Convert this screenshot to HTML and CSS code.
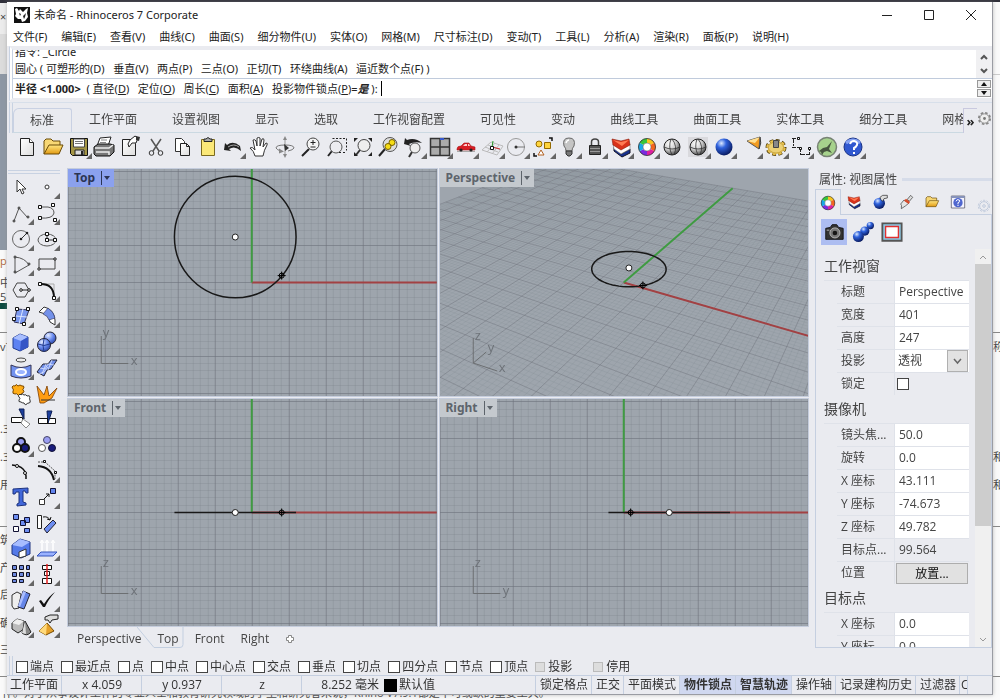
FILE: index.html
```html
<!DOCTYPE html>
<html lang="zh-CN">
<head>
<meta charset="utf-8">
<title>未命名 - Rhinoceros 7 Corporate</title>
<link rel="stylesheet" href="styles.css">
</head>
<body>
<svg class="defs" aria-hidden="true">
  <defs>
    <radialGradient id="gGray" cx=".35" cy=".28" r=".8"><stop offset="0" stop-color="#fff"/><stop offset=".5" stop-color="#ccc"/><stop offset="1" stop-color="#333"/></radialGradient>
    <radialGradient id="gBlue" cx=".35" cy=".28" r=".8"><stop offset="0" stop-color="#dbe9ff"/><stop offset=".35" stop-color="#2f62dd"/><stop offset="1" stop-color="#04104e"/></radialGradient>
    <radialGradient id="gSoft" cx=".35" cy=".28" r=".8"><stop offset="0" stop-color="#e6edff"/><stop offset=".5" stop-color="#6b8cf0"/><stop offset="1" stop-color="#2540a0"/></radialGradient>
    <linearGradient id="gPage" x1="0" y1="0" x2="1" y2="1"><stop offset="0" stop-color="#fff"/><stop offset="1" stop-color="#ddd"/></linearGradient>
    <linearGradient id="gGold" x1="0" y1="0" x2="0" y2="1"><stop offset="0" stop-color="#ffe680"/><stop offset="1" stop-color="#e29a12"/></linearGradient>
    <symbol id="wheel" viewBox="0 0 24 24"><g fill="none" stroke-width="5.500"><path d="M12 4.500A7.500 7.500 0 0 1 18.500 8.200" stroke="#f7c51e"/><path d="M18.500 8.200A7.500 7.500 0 0 1 18.500 15.800" stroke="#f4641e"/><path d="M18.500 15.800A7.500 7.500 0 0 1 12 19.500" stroke="#e020a0"/><path d="M12 19.500A7.500 7.500 0 0 1 5.500 15.800" stroke="#7a2be0"/><path d="M5.500 15.800A7.500 7.500 0 0 1 5.500 8.200" stroke="#18a8e8"/><path d="M5.500 8.200A7.500 7.500 0 0 1 12 4.500" stroke="#35c63c"/></g><circle cx="12" cy="12" r="10.200" fill="none" stroke="#333"/><circle cx="12" cy="12" r="4.800" fill="#fff" stroke="#555" stroke-width=".6"/></symbol>
    <symbol id="layers" viewBox="0 0 24 24"><path d="M5 12l7 7 9-5v4l-8 4-8-6z" fill="#16308e" stroke="#112"/><path d="M4 9l8 5 9-5v5l-9 5-7-5z" fill="#fff" stroke="#777" stroke-width=".6"/><path d="M3 4l9 2 8-2 1 6-9 5-8-5z" fill="#d8321a" stroke="#8c1d0c" stroke-width=".6"/><path d="M4 5l9 6 7-6-8 2z" fill="#ff7a52"/></symbol>
    <symbol id="folder" viewBox="0 0 24 24"><path d="M3 19V6l2-2h5l2 2h7v4" fill="#f7d774" stroke="#6b4a06"/><path d="M3 19l5-9h14l-4 9z" fill="url(#gGold)" stroke="#6b4a06"/></symbol>
    <symbol id="ball" viewBox="0 0 24 24"><circle cx="12" cy="12" r="8" fill="url(#gGray)" stroke="#222"/><path d="M4 12q8 4 16 0M11 4q-3 8 1 16M12 4q6 7 2 16" fill="none" stroke="#333" stroke-width=".8"/></symbol>
  </defs>
</svg>

<div class="desktop" aria-hidden="true">
  <span class="frag l1">×</span><span class="frag l2">p</span><span class="frag l3">中.</span><span class="frag l4">5</span><span class="frag l5">v7</span><span class="frag l6">.3</span><span class="frag l7">.3</span><span class="frag l8">用</span><span class="frag l9">筑</span><span class="frag l10">产</span><span class="frag l11">后</span><span class="frag l12">确</span><span class="frag l13">三</span><span class="frag r1">称</span><span class="frag r2">和</span><span class="frag r3">和</span>
  <i class="rule a"></i><i class="rule b"></i><i class="rule c"></i><i class="rule d"></i>
  <p class="under">作。对于从事设计工作的专业人士和教育研究领域的学生和研究者来说，Rhino V7.9.1都是不可或缺的重要工具。</p>
</div>

<div class="window">
  <header class="titlebar">
    <svg class="logo" viewBox="0 0 16 16"><path d="M0 0h16v16H0z" fill="#111"/><path d="M1 2l2-1 2 3 1-2 3 3 3-3 2-1-1 5 1 4-3 4-3 1-1-3-3 0-3-3 1-2z" fill="#fff"/><path d="M5 6l2 1-1 2zM9 9l3-3-1 4-1 2z" fill="#222"/></svg>
    <h1>未命名 - Rhinoceros 7 Corporate</h1>
    <div class="winbtns">
      <button aria-label="最小化"><svg viewBox="0 0 12 12"><path d="M1 6.500h10"/></svg></button>
      <button aria-label="最大化"><svg viewBox="0 0 12 12"><path d="M1.500 1.500h9v9h-9z"/></svg></button>
      <button aria-label="关闭"><svg viewBox="0 0 12 12"><path d="M1 1l10 10M11 1L1 11"/></svg></button>
    </div>
  </header>
  <nav class="menubar">
    <button>文件(F)</button><button>编辑(E)</button><button>查看(V)</button><button>曲线(C)</button><button>曲面(S)</button><button>细分物件(U)</button><button>实体(O)</button><button>网格(M)</button><button>尺寸标注(D)</button><button>变动(T)</button><button>工具(L)</button><button>分析(A)</button><button>渲染(R)</button><button>面板(P)</button><button>说明(H)</button>
  </nav>

  <section class="command">
    <div class="cmdrow history">
      <div class="log"><p>指令: _Circle</p><p>圆心 ( 可塑形的(D)&nbsp;&nbsp; 垂直(V)&nbsp;&nbsp; 两点(P)&nbsp;&nbsp; 三点(O)&nbsp;&nbsp; 正切(T)&nbsp;&nbsp; 环绕曲线(A)&nbsp;&nbsp; 逼近数个点(F) )</p></div>
      <div class="cmdscroll"><button aria-label="向上"><svg viewBox="0 0 8 6"><path d="M1 5l3-3 3 3"/></svg></button><button aria-label="向下"><svg viewBox="0 0 8 6"><path d="M1 1l3 3 3-3"/></svg></button></div>
    </div>
    <div class="cmdrow prompt">
      <label for="cmd"><b>半径 &lt;1.000&gt;</b>&nbsp; ( 直径(<u>D</u>)&nbsp;&nbsp; 定位(<u>O</u>)&nbsp;&nbsp; 周长(<u>C</u>)&nbsp;&nbsp; 面积(<u>A</u>)&nbsp;&nbsp; 投影物件锁点(<u>P</u>)=<em>是</em> ):</label>
      <span class="caret"></span><input id="cmd" type="text">
      <div class="spin"><button aria-label="上一个"><svg viewBox="0 0 6 4"><path d="M0 4l3-4 3 4z"/></svg></button><button aria-label="下一个"><svg viewBox="0 0 6 4"><path d="M0 0h6L3 4z"/></svg></button></div>
    </div>
  </section>

  <div class="tabbar">
    <div class="tabs"><button class="on">标准</button><button>工作平面</button><button>设置视图</button><button>显示</button><button>选取</button><button>工作视窗配置</button><button>可见性</button><button>变动</button><button>曲线工具</button><button>曲面工具</button><button>实体工具</button><button>细分工具</button><button>网格</button></div>
    <button class="more" aria-label="更多">»</button>
    <button class="gear" aria-label="选项"><svg viewBox="0 0 16 16"><circle cx="8" cy="8" r="6" fill="none" stroke="#888" stroke-width="2" stroke-dasharray="2.700 2"/><circle cx="8" cy="8" r="5" fill="#eee" stroke="#888"/><circle cx="8" cy="8" r="1.500" fill="#777"/></svg></button>
  </div>

  <div class="toolbar">
    <button aria-label="新建"><svg viewBox="0 0 24 24"><path d="M5.500 3.500h9l4 4v13h-13z" fill="url(#gPage)" stroke="#222"/><path d="M14.500 3.500v4h4" fill="#fff" stroke="#222"/></svg></button>
    <button aria-label="打开"><svg viewBox="0 0 24 24"><use href="#folder"/></svg></button>
    <button class="fly" aria-label="保存"><svg viewBox="0 0 24 24"><path d="M3.500 3.500h17v17h-15l-2-2z" fill="#a49646" stroke="#111"/><path d="M6.500 4h11v8h-11z" fill="#fff" stroke="#444"/><path d="M8 6.500h8M8 8.500h8" stroke="#777"/><path d="M8 15h9v5H8z" fill="#ddd" stroke="#222"/><path d="M14 16h2v4h-2z" fill="#222"/></svg></button>
    <button aria-label="打印"><svg viewBox="0 0 24 24"><path d="M8 3l11-1-3 9H5z" fill="#fff" stroke="#222"/><path d="M2 12l4-3h12l4 1v7l-4 4H4l-2-2z" fill="#777" stroke="#111"/><path d="M3 13h14l4-3M4 17h13v3" fill="none" stroke="#eee" stroke-width="1.500"/><path d="M9 5h6M8 7.500h6" stroke="#888"/></svg></button>
    <button aria-label="文件属性"><svg viewBox="0 0 24 24"><path d="M4.500 4.500h9l4 4v12h-13z" fill="url(#gPage)" stroke="#222"/><path d="M12 5l-2 4 1 3 3-4h4l2-5-3-2z" fill="#fff" stroke="#222"/><path d="M18 1l4 1-1 4-3-1z" fill="#333"/></svg></button>
    <button aria-label="剪切"><svg viewBox="0 0 24 24"><path d="M7 4l8 12M17 4L9 16" stroke="#555" stroke-width="1.500" fill="none"/><circle cx="7.500" cy="18" r="2.300" fill="none" stroke="#333"/><circle cx="16.500" cy="18" r="2.300" fill="none" stroke="#333"/></svg></button>
    <button aria-label="复制"><svg viewBox="0 0 24 24"><path d="M5.500 3.500h6l3 3v10h-9z" fill="#fff" stroke="#333"/><path d="M10.500 8.500h6l3 3v9h-9z" fill="url(#gPage)" stroke="#222"/><path d="M16.500 8.500v3h3" fill="none" stroke="#222"/></svg></button>
    <button aria-label="粘贴"><svg viewBox="0 0 24 24"><path d="M5.500 4.500h13v16h-13z" fill="#fbe878" stroke="#7b6a1e"/><path d="M8 6.500V4h2q2-3 4 0h2v2.500z" fill="#aaa" stroke="#222"/></svg></button>
    <button class="fly" aria-label="撤销"><svg viewBox="0 0 24 24"><path d="M3 15l1-7 2 2q6-5 13 1l1 5q-6-6-12-2l2 2z" fill="#222"/><path d="M7 12q6-4 11 0" stroke="#aaa" fill="none"/></svg></button>
    <button aria-label="平移"><svg viewBox="0 0 24 24"><path d="M8 21q-1-5-5-8 2-2 5 2L6 5q2-1 3 1l1 5V3q2-1 3 0v8l2-7q2-1 2 1l-1 7 3-4q2 0 1 2-3 5-4 11z" fill="#fff" stroke="#333"/></svg></button>
    <button aria-label="旋转视图"><svg viewBox="0 0 24 24"><path d="M12 3v18" stroke="#999"/><path d="M3 13q0-3 9-3t9 3q-1 2-6 3M3 13q1 2 5 3" fill="none" stroke="#777"/><path d="M12 1l2 4h-4zM12 23l2-4h-4zM6 13.500l5 3-5 2z" fill="#888"/><path d="M11 9l5 4-4 3z" fill="#333"/></svg></button>
    <button aria-label="缩放"><svg viewBox="0 0 24 24"><path d="M10 14l-7 7" stroke="#222" stroke-width="2"/><circle cx="14" cy="9" r="6" fill="#f4f4f4" stroke="#444"/><path d="M14 5v5M11.500 7.500h5M11.500 12h5" stroke="#222"/></svg></button>
    <button aria-label="窗选缩放"><svg viewBox="0 0 24 24"><path d="M7.500 3.500h14v12" fill="none" stroke="#222" stroke-dasharray="2 1.500"/><path d="M7 16l-4 5" stroke="#222" stroke-width="2"/><circle cx="11" cy="12" r="6" fill="#ececf0" stroke="#555"/><path d="M14 17.500h7" stroke="#222" stroke-dasharray="2"/></svg></button>
    <button aria-label="缩放至范围"><svg viewBox="0 0 24 24"><path d="M9 15l-4 5" stroke="#333" stroke-width="2"/><circle cx="13" cy="10.500" r="6" fill="#eee" stroke="#444"/><path d="M3 7V3h4zM17 3h4v4zM21 17v4h-4zM7 21H3v-4z" fill="#222"/></svg></button>
    <button aria-label="缩放选取物件"><svg viewBox="0 0 24 24"><path d="M9 14l-6 7" stroke="#222" stroke-width="2"/><circle cx="14" cy="9.500" r="7" fill="#ddd" stroke="#555"/><circle cx="16" cy="7.500" r="3" fill="#f6dd14" stroke="#766000"/><circle cx="12" cy="11.500" r="3" fill="#f6dd14" stroke="#766000"/></svg></button>
    <button class="fly" aria-label="上一视图"><svg viewBox="0 0 24 24"><path d="M2 9l1-6 2 2q8-3 15 3-7-2-13 1l2 2z" fill="#222"/><path d="M10 17l-3 5" stroke="#333" stroke-width="2"/><circle cx="13" cy="13" r="5" fill="#eee" stroke="#555"/></svg></button>
    <button class="fly" aria-label="四视图"><svg viewBox="0 0 24 24"><path d="M2.500 3.500h19v17h-19z" fill="#ababab" stroke="#333" stroke-width="1.500"/><path d="M12 3v18M3 12h18" stroke="#333" stroke-width="1.500"/><path d="M12 3h4v2h-4z" fill="#3759cc"/></svg></button>
    <button class="fly" aria-label="设置视图"><svg viewBox="0 0 24 24"><path d="M3 16.500h18" stroke="#aaa"/><path d="M3 14q0-3 4-3l3-3h5l2 3 4 1v3H3z" fill="#d71e24" stroke="#a81418" stroke-width=".6"/><path d="M9 11l2-2h2v2zM14 9h1l1 2h-2z" fill="#fcc"/><circle cx="7" cy="15" r="1.600" fill="#222"/><circle cx="17" cy="15" r="1.600" fill="#222"/></svg></button>
    <button class="fly" aria-label="工作平面"><svg viewBox="0 0 24 24"><path d="M2 15l9-8 12 4-6 9zM5 12l13 5M8 10l13 5M7 17l8-9M12 19l7-9" fill="none" stroke="#bbb"/><path d="M12 12l8 2" stroke="#c22"/><path d="M12 12l1-6" stroke="#292"/><path d="M10.500 11.500h3v3h-3z" fill="#fff" stroke="#111"/></svg></button>
    <button class="fly" aria-label="设置工作平面"><svg viewBox="0 0 24 24"><circle cx="11" cy="12" r="8.500" fill="none" stroke="#999"/><path d="M11 12h9" stroke="#777"/><circle cx="11" cy="12" r="1.500" fill="#333"/></svg></button>
    <button class="fly" aria-label="选取"><svg viewBox="0 0 24 24"><path d="M3 18v3h3M18 3h3v3" fill="none" stroke="#111" stroke-width="1.500"/><circle cx="8" cy="9" r="3" fill="#ffd53e" stroke="#946a00"/><path d="M13.500 7.500h6v6h-6z" fill="#ffd53e" stroke="#946a00"/><path d="M10 15l3 5H7z" fill="#fff" stroke="#b06020"/></svg></button>
    <button class="fly" aria-label="显示与隐藏"><svg viewBox="0 0 24 24"><path d="M9 16q0-3-2-5-2-8 5-8t5 8q-2 2-2 5z" fill="#c4c4c4" stroke="#666"/><path d="M9 8q1-3 3-3" stroke="#fff" fill="none" stroke-width="1.500"/><path d="M9 16h6v3l-2 2h-2l-2-2z" fill="#777" stroke="#333"/></svg></button>
    <button class="fly" aria-label="锁定"><svg viewBox="0 0 24 24"><path d="M8.500 11V7q0-3 3.500-3t3.500 3v4" fill="none" stroke="#444" stroke-width="1.500"/><path d="M6.500 10.500h11v9h-11z" fill="#555" stroke="#222"/><path d="M7 13.500h10M7 16.500h10" stroke="#999"/></svg></button>
    <button class="fly" aria-label="图层"><svg viewBox="0 0 24 24"><use href="#layers"/></svg></button>
    <button class="fly" aria-label="属性"><svg viewBox="0 0 24 24"><use href="#wheel" x="2" y="2" width="20" height="20"/></svg></button>
    <button aria-label="着色"><svg viewBox="0 0 24 24"><use href="#ball"/></svg></button>
    <button class="fly" aria-label="着色选项"><svg viewBox="0 0 24 24"><path d="M2 2h20v20H2z" fill="#d9d9dd"/><use href="#ball"/></svg></button>
    <button class="fly" aria-label="渲染"><svg viewBox="0 0 24 24"><circle cx="12" cy="12" r="8.500" fill="url(#gBlue)"/></svg></button>
    <button class="fly" aria-label="聚光灯"><svg viewBox="0 0 24 24"><path d="M22 2L9 6l12 8z" fill="#f29b20" stroke="#555"/><path d="M22 2L9 6l8 2z" fill="#ffdf90"/><path d="M22 2q2 6-1 12" fill="none" stroke="#333"/></svg></button>
    <button class="fly" aria-label="选项"><svg viewBox="0 0 24 24"><ellipse cx="12" cy="12.500" rx="8.500" ry="6.500" fill="none" stroke="#4b3800" stroke-width="4" stroke-dasharray="3.600 2.200"/><ellipse cx="12" cy="12.500" rx="8.500" ry="6.500" fill="#e8c862" stroke="#e8c04c" stroke-width="2.600" stroke-dasharray="2.800 3" stroke-dashoffset="-.4"/><ellipse cx="12" cy="12.500" rx="7.500" ry="5.500" fill="#ecd074" stroke="#b08a20" stroke-width=".6"/><path d="M9.500 5.500h5v7h-5z" fill="#888" stroke="#444"/></svg></button>
    <button class="fly" aria-label="尺寸标注"><svg viewBox="0 0 24 24"><path d="M3 3.500h6M4.500 4v7M3 12.500h8M11.500 13v7M12 19.500h8M20.500 12v8" fill="none" stroke="#222" stroke-dasharray="4 1"/><path d="M8.500 2.500h2v2h-2zM10.500 12.500h2v2h-2zM19.500 12.500h2v2h-2z" fill="#fff" stroke="#111"/></svg></button>
    <button class="fly" aria-label="Grasshopper"><svg viewBox="0 0 24 24"><circle cx="12" cy="12" r="9.500" fill="#a6d28c" stroke="#778274" stroke-width="1.500"/><path d="M4 16l4-3 4-1 5-6-3 8 3 4-5-2-3 1-2 3-1-3z" fill="#46553f"/></svg></button>
    <button class="fly" aria-label="帮助"><svg viewBox="0 0 24 24"><circle cx="12" cy="12" r="9" fill="#3058d0" stroke="#183080"/><path d="M5 8q7-6 14 0" stroke="#86a2f2" stroke-width="3" fill="none"/><path d="M9 9q1-3 4-3 4 1 3 4-1 2-3 3v2M13 17v2" fill="none" stroke="#fff" stroke-width="2"/></svg></button>
  </div>

  <main class="work">
    <aside class="palette">
      <button aria-label="选取"><svg viewBox="0 0 24 24"><path d="M8 5v12l3-3 2 5 2-1-2-4h4z" fill="#fff" stroke="#333"/></svg></button>
      <button class="fly" aria-label="点"><svg viewBox="0 0 24 24"><circle cx="12" cy="12" r="2" fill="#fff" stroke="#333"/></svg></button>
      <button class="fly" aria-label="多重直线"><svg viewBox="0 0 24 24"><path d="M5 20L10 7l9 10" fill="none" stroke="#555"/><g fill="#fff" stroke="#222"><circle cx="5" cy="20" r="1"/><circle cx="10" cy="7" r="1"/><circle cx="19" cy="16" r="1"/></g></svg></button>
      <button class="fly" aria-label="曲线"><svg viewBox="0 0 24 24"><path d="M5 6h8q6 1 6 6-1 6-14 5" fill="none" stroke="#555"/><g fill="#fff" stroke="#111"><path d="M3.500 4.500h3v3h-3zM16.500 2.500h3v3h-3zM3.500 15.500h3v3h-3zM18.500 17.500h3v3h-3z"/></g></svg></button>
      <button class="fly" aria-label="圆"><svg viewBox="0 0 24 24"><circle cx="12" cy="12" r="8.500" fill="none" stroke="#666"/><path d="M12 12l6-6" stroke="#333"/><circle cx="12" cy="12" r="1.300" fill="#222"/><circle cx="18" cy="6" r="1.300" fill="#222"/></svg></button>
      <button class="fly" aria-label="椭圆"><svg viewBox="0 0 24 24"><ellipse cx="12" cy="13" rx="9" ry="6" fill="none" stroke="#555"/><path d="M12 6v7h8" fill="none" stroke="#333"/><g fill="#fff" stroke="#111"><path d="M10.500 5.500h3v3h-3zM10.500 11.500h3v3h-3zM18.500 11.500h3v3h-3z"/></g></svg></button>
      <button class="fly" aria-label="圆弧"><svg viewBox="0 0 24 24"><path d="M6 21V5q10 1 14 8z" fill="none" stroke="#555"/><g fill="#fff" stroke="#222"><circle cx="6" cy="20" r="1"/><circle cx="6" cy="5" r="1"/><circle cx="20" cy="12" r="1"/></g></svg></button>
      <button class="fly" aria-label="矩形"><svg viewBox="0 0 24 24"><path d="M4 7h16v10H4z" fill="none" stroke="#444"/><g fill="#fff" stroke="#111"><circle cx="4" cy="17" r="1.200"/><circle cx="20" cy="7" r="1.200"/></g></svg></button>
      <button class="fly" aria-label="多边形"><svg viewBox="0 0 24 24"><path d="M8 5h8l4 7-4 7H8l-4-7z" fill="none" stroke="#444"/><path d="M12 12h8" stroke="#222"/><circle cx="12" cy="12" r="1.300" fill="#fff" stroke="#111"/><circle cx="20" cy="12" r="1.300" fill="#fff" stroke="#111"/></svg></button>
      <button class="fly" aria-label="圆角"><svg viewBox="0 0 24 24"><path d="M4 6h15v14" fill="none" stroke="#aaa"/><path d="M4 6q15-1 15 14" fill="none" stroke="#111" stroke-width="2"/><path d="M3.500 4.500h3v3h-3zM17.500 18.500h3v3h-3z" fill="#fff" stroke="#111"/></svg></button>
      <button class="fly" aria-label="曲面"><svg viewBox="0 0 24 24"><path d="M8 5l12 1-5 14-10-2z" fill="#7b98ee" stroke="#335"/><path d="M14 5l-4 15M7 12l11 1" stroke="#dce6ff"/><g fill="#fff" stroke="#111"><path d="M6.500 3.500h3v3h-3zM17.500 3.500h3v3h-3zM3.500 13.500h3v3h-3zM13.500 18.500h3v3h-3z"/></g></svg></button>
      <button class="fly" aria-label="曲面建模"><svg viewBox="0 0 24 24"><path d="M4 8l5-5q10 2 11 13v5l-5-3q-1-8-11-10z" fill="#fff" stroke="#333"/><path d="M8 10l5-6q6 4 7 10l-6 2q-1-4-6-6z" fill="#7391ea" stroke="#335" stroke-width=".6"/></svg></button>
      <button class="fly" aria-label="实体"><svg viewBox="0 0 24 24"><path d="M4 8l7-4 8 3v10l-8 4-7-3z" fill="#5d82f2" stroke="#223c90"/><path d="M4 8l7-4 8 3-7 4z" fill="#a8beff"/><path d="M12 11l7-4v10l-8 4z" fill="#3556c6"/></svg></button>
      <button class="fly" aria-label="布尔运算"><svg viewBox="0 0 24 24"><circle cx="15" cy="8" r="6" fill="url(#gSoft)" stroke="#223"/><circle cx="9" cy="15" r="6.500" fill="url(#gSoft)" stroke="#223"/><path d="M3 14q6 3 12 0M9 9q-2 6 0 13" fill="none" stroke="#223c90"/></svg></button>
      <button class="fly" aria-label="从物件建立"><svg viewBox="0 0 24 24"><ellipse cx="12" cy="4" rx="5" ry="2" fill="#eee" stroke="#444"/><path d="M2 9q10 5 20 0v11q-10 4-20 0z" fill="#7292ef" stroke="#335"/><ellipse cx="12" cy="16" rx="5" ry="3" fill="#9db6ff" stroke="#fff" stroke-width="2"/></svg></button>
      <button class="fly" aria-label="网格"><svg viewBox="0 0 24 24"><path d="M2 16l6-8 5 0 3-4 6 0-6 9-4 1-3 6z" fill="#7391ea" stroke="#223"/><path d="M5 12l5 1 3-5 6 1M4 18l5-2 4-5M11 8l-4 10M17 4l-4 10" stroke="#dce4ff" fill="none" stroke-width=".8"/></svg></button>
      <button aria-label="炸开"><svg viewBox="0 0 24 24"><path d="M3 5q1-2 3-1 1-3 3 0 2-2 4 0 2-1 2 2-2 1-1 2 2 1 0 3-2 0-2 2-2 2-3 0-1-2-3-1-3 0-2-3 1-1 0-2z" fill="#ffad18" stroke="#7c4800"/><path d="M12 13q1-2 3 0 2-1 3 1 3-1 3 1-1 2 0 3 1 3-1 3-2 0-2 1-2 2-3-1-2 0-3-1-3 0-2-2 2-2 0-3t1-3z" fill="#fff" stroke="#333"/></svg></button>
      <button aria-label="组合"><svg viewBox="0 0 24 24"><path d="M5 21L2 4l7 9 3-9 2 10 8-8-5 10-8 5z" fill="#ff9c12" stroke="#7c3d00" stroke-width=".8"/><path d="M6 18h14" stroke="#333"/></svg></button>
      <button aria-label="修剪"><svg viewBox="0 0 24 24"><path d="M2.500 10.500h11v5h-11z" fill="#fff" stroke="#111"/><path d="M10 2h5v10z" fill="#1c3f9e" stroke="#0d1e55"/><path d="M14 12l7 5-4 4-5-5z" fill="#fff" stroke="#888"/></svg></button>
      <button aria-label="分割"><svg viewBox="0 0 24 24"><path d="M3.500 11.500h17v5h-17z" fill="#fff" stroke="#111"/><path d="M12 4h5l-4 12z" fill="#1c3f9e" stroke="#0d1e55"/><path d="M12.500 11v6" stroke="#111"/></svg></button>
      <button class="fly" aria-label="群组"><svg viewBox="0 0 24 24"><circle cx="12" cy="9" r="4" fill="#9a9df2" stroke="#111" stroke-width="2"/><circle cx="16" cy="15" r="4" fill="#191c7c" stroke="#111" stroke-width="2"/><circle cx="8" cy="15" r="4" fill="#fff" stroke="#111" stroke-width="2"/></svg></button>
      <button aria-label="解散群组"><svg viewBox="0 0 24 24"><circle cx="12" cy="7" r="3.500" fill="#9a9df2" stroke="#446"/><circle cx="17" cy="15" r="3.500" fill="#191c7c" stroke="#113"/><circle cx="7" cy="15" r="3.500" fill="#fff" stroke="#555"/></svg></button>
      <button aria-label="编辑点"><svg viewBox="0 0 24 24"><path d="M3 6q15 1 14 14" fill="none" stroke="#111" stroke-width="1.500"/><g fill="#fff" stroke="#111"><circle cx="8" cy="7" r="1.500"/><circle cx="16" cy="14" r="1.500"/></g></svg></button>
      <button class="fly" aria-label="控制点"><svg viewBox="0 0 24 24"><path d="M3 7q13 1 16 14" fill="none" stroke="#111" stroke-width="2"/><path d="M3 3h7l10 9v8" fill="none" stroke="#555" stroke-dasharray="2 1"/><path d="M8.500 1.500h2v2h-2zM19.500 12.500h2v2h-2z" fill="#fff" stroke="#111"/></svg></button>
      <button aria-label="文字"><svg viewBox="0 0 24 24"><path d="M4 4l15-1v5h-2l-1-2h-2v11l3 1v2l-9 1v-2l2-1V7H7L6 9H4z" fill="#4167da" stroke="#1d327e"/></svg></button>
      <button class="fly" aria-label="移动"><svg viewBox="0 0 24 24"><path d="M15.500 3.500h5v5h-5z" fill="#6184ee" stroke="#113"/><path d="M4.500 14.500h5v5h-5z" fill="#fff" stroke="#333"/><path d="M9 14l5-5M11 9h3v3" fill="none" stroke="#111"/></svg></button>
      <button aria-label="复制"><svg viewBox="0 0 24 24"><g stroke="#113"><path d="M4.500 3.500h5v5h-5zM11.500 9.500h5v5h-5zM15.500 6.500h5v5h-5zM15.500 17.500h5v4h-5z" fill="#6d8df1"/><path d="M4.500 15.500h5v5h-5z" fill="#fff"/></g></svg></button>
      <button aria-label="旋转"><svg viewBox="0 0 24 24"><path d="M2.500 4.500h4v13h-4z" fill="#fff" stroke="#222"/><path d="M9 18L18 9l3 3-9 10z" fill="#6d8df1" stroke="#223"/><path d="M8 6q5-1 7 3M12 8l3 1 1-3" fill="none" stroke="#111"/></svg></button>
      <button class="fly" aria-label="倒角"><svg viewBox="0 0 24 24"><path d="M3 8l8-6 10 3v12l-9 4-9-4z" fill="#5479e8" stroke="#1f347e"/><path d="M3 8l8-6 10 3-8 5z" fill="#a7bdff"/><path d="M10 21v-6l7-3v7z" fill="#fff" stroke="#333"/></svg></button>
      <button class="fly" aria-label="投影"><svg viewBox="0 0 24 24"><path d="M7 4v11M12 4v11M18 4v11" stroke="#fff" stroke-width="1.500"/><path d="M5 6l2-3 2 3M10 6l2-3 2 3M16 6l2-3 2 3" fill="none" stroke="#fff"/><path d="M2 19l4-4h16l-4 4z" fill="#9ab2ff" stroke="#3554bb"/></svg></button>
      <button class="fly" aria-label="阵列"><svg viewBox="0 0 24 24"><path d="M3.500 3.500h4v4h-4zM10.500 3.500h4v4h-4zM17.500 3.500h3v4h-3zM3.500 10.500h4v4h-4zM10.500 10.500h4v4h-4zM17.500 10.500h3v4h-3zM3.500 17.500h4v3h-4zM10.500 17.500h4v3h-4z" fill="#6c87dc" stroke="#112"/></svg></button>
      <button class="fly" aria-label="对齐"><svg viewBox="0 0 24 24"><path d="M7.500 3.500h9v4h-9zM9.500 9.500h5v4h-5zM7.500 16.500h9v5h-9z" fill="#fff" stroke="#111"/><path d="M12 2v20" stroke="#e02020" stroke-width="1.500"/></svg></button>
      <button class="fly" aria-label="弯曲"><svg viewBox="0 0 24 24"><path d="M3 7l5-3 4 2-2 14-5 1-2-3z" fill="#eee" stroke="#333"/><path d="M14 3l7 3-6 15-6-2z" fill="#6585e8" stroke="#223"/><path d="M14 3l3 1-6 15-2-1z" fill="#a9bcff"/></svg></button>
      <button class="fly" aria-label="检查"><svg viewBox="0 0 24 24"><path d="M4 13l2-1 3 4Q14 8 20 4q-7 8-10 15H8z" fill="#111"/></svg></button>
      <button class="fly" aria-label="网格工具"><svg viewBox="0 0 24 24"><path d="M3 9l5-4 7 2v8l-6 4-6-4z" fill="#bbb" stroke="#222"/><path d="M3 9l5-4 7 2-5 4z" fill="#eee"/><path d="M16 7l6 11q-4 5-9 1z" fill="#888" stroke="#222"/><path d="M16 7l-3 12 4 1z" fill="#ddd"/></svg></button>
      <button class="fly" aria-label="提取"><svg viewBox="0 0 24 24"><path d="M4 17l8-8 7 8-8 4z" fill="#e6a12a" stroke="#734800"/><path d="M4 17l8-8-1 12z" fill="#ffd97a"/><path d="M10 3l5-2h8v4l-6 1-2 3-2-3h-3z" fill="#ddd" stroke="#222"/></svg></button>
    </aside>

    <section class="stage">
      <div class="views">
        <article class="view active"><svg class="canvas" data-view="top" viewBox="0 0 369 227" preserveAspectRatio="xMidYMid slice"></svg><button class="vlabel"><span>Top</span><i></i></button></article>
        <article class="view"><svg class="canvas" data-view="perspective" viewBox="0 0 369 227" preserveAspectRatio="xMidYMid slice"></svg><button class="vlabel"><span>Perspective</span><i></i></button></article>
        <article class="view"><svg class="canvas" data-view="front" viewBox="0 0 369 227" preserveAspectRatio="xMidYMid slice"></svg><button class="vlabel"><span>Front</span><i></i></button></article>
        <article class="view"><svg class="canvas" data-view="right" viewBox="0 0 369 227" preserveAspectRatio="xMidYMid slice"></svg><button class="vlabel"><span>Right</span><i></i></button></article>
      </div>
      <div class="viewtabs"><button>Perspective</button><button class="on"><svg viewBox="0 0 52 24" aria-hidden="true"><path d="M0 0l17 20.500h26q3 0 3-3V0"/></svg>Top</button><button>Front</button><button>Right</button><button class="plus" aria-label="新建视图"><svg viewBox="0 0 10 10"><path d="M3.500 1.500h3v2h2v3h-2v2h-3v-2h-2v-3h2z"/></svg></button></div>
    </section>

    <aside class="props">
      <h2>属性: 视图属性</h2>
      <div class="ptabs">
        <button class="on" aria-label="属性"><svg viewBox="0 0 24 24"><use href="#wheel"/></svg></button>
        <button aria-label="图层"><svg viewBox="0 0 24 24"><use href="#layers"/></svg></button>
        <button aria-label="渲染"><svg viewBox="0 0 24 24"><circle cx="11" cy="14" r="8.500" fill="url(#gBlue)"/><path d="M12 5l4-3h7v4l-5 1-2 4-3-3z" fill="#ddd" stroke="#222"/></svg></button>
        <button aria-label="材质"><svg viewBox="0 0 24 24"><path d="M14 8l5-6 3 3-5 6z" fill="#ddd" stroke="#333"/><path d="M9 9l7 5-5 4-6 4q1-6-1-7z" fill="#e6e6e6" stroke="#333"/><path d="M12 7l6 5-2 3-7-5z" fill="#d84a2a"/></svg></button>
        <button aria-label="图库"><svg viewBox="0 0 24 24"><use href="#folder"/></svg></button>
        <button aria-label="帮助"><svg viewBox="0 0 24 24"><path d="M2 3h20v18H2z" fill="#f4f4ff" stroke="#445"/><path d="M2 3h20v3H2z" fill="#8793ba"/><circle cx="12" cy="13" r="7" fill="#4f66cf"/><path d="M9 11q1-4 5-2 2 3-2 4v2M12 16v2" fill="none" stroke="#fff" stroke-width="1.500"/></svg></button>
        <button class="pgear" aria-label="选项"><svg viewBox="0 0 16 16"><circle cx="8" cy="8" r="6.500" fill="none" stroke="#b9c5d8" stroke-dasharray="2.500 1.600"/><circle cx="8" cy="8" r="5" fill="#eaebf0" stroke="#b9c5d8"/><circle cx="8" cy="8" r="1.500" fill="none" stroke="#b9c5d8"/></svg></button>
      </div>
      <div class="pbody">
        <div class="modes">
          <button class="on" aria-label="相机"><svg viewBox="0 0 24 24"><path d="M3 8l5-1 2-3h5l2 3 5 1v12H3z" fill="#333" stroke="#111"/><circle cx="13" cy="13" r="5.500" fill="#777" stroke="#bbb"/><circle cx="13" cy="13" r="2.500" fill="#151515"/><path d="M4 10h3" stroke="#bbb"/></svg></button>
          <button aria-label="材质"><svg viewBox="0 0 24 24"><circle cx="20" cy="5" r="4" fill="url(#gBlue)"/><circle cx="14" cy="11" r="5" fill="url(#gBlue)"/><circle cx="7" cy="17" r="6" fill="url(#gBlue)"/></svg></button>
          <button aria-label="视窗"><svg viewBox="0 0 24 24"><path d="M1.500 2.500h21v19h-21z" fill="#8ecbe6" stroke="#555" stroke-width="2"/><path d="M5 6h14v12H5z" fill="#fff" stroke="#e03030" stroke-width="1.500"/></svg></button>
        </div>
        <div class="scroller">
          <form class="fields">
            <h3>工作视窗</h3>
            <div class="row first"><label for="f1">标题</label><input id="f1" value="Perspective"></div>
            <div class="row"><label for="f2">宽度</label><input id="f2" value="401"></div>
            <div class="row"><label for="f3">高度</label><input id="f3" value="247"></div>
            <div class="row"><label for="f4">投影</label><select id="f4"><option>透视</option><option>平行</option></select></div>
            <div class="row plain"><label for="f5">锁定</label><input id="f5" type="checkbox"></div>
            <h3>摄像机</h3>
            <div class="row first"><label for="f6">镜头焦...</label><input id="f6" value="50.0"></div>
            <div class="row"><label for="f7">旋转</label><input id="f7" value="0.0"></div>
            <div class="row"><label for="f8">X 座标</label><input id="f8" value="43.111"></div>
            <div class="row"><label for="f9">Y 座标</label><input id="f9" value="-74.673"></div>
            <div class="row"><label for="f10">Z 座标</label><input id="f10" value="49.782"></div>
            <div class="row plain"><label for="f11">目标点...</label><output id="f11">99.564</output></div>
            <div class="row plain"><label for="f12">位置</label><button id="f12" type="button">放置...</button></div>
            <h3>目标点</h3>
            <div class="row first"><label for="f13">X 座标</label><input id="f13" value="0.0"></div>
            <div class="row"><label for="f14">Y 座标</label><input id="f14" value="0.0"></div>
          </form>
          <div class="scrollbar"><button aria-label="向上"><svg viewBox="0 0 8 6"><path d="M1 5l3-3 3 3"/></svg></button><div class="thumb"></div><div class="trackend"></div><button aria-label="向下"><svg viewBox="0 0 8 6"><path d="M1 1l3 3 3-3"/></svg></button></div>
        </div>
      </div>
    </aside>
  </main>

  <div class="osnap">
    <label><input type="checkbox">端点</label><label><input type="checkbox">最近点</label><label><input type="checkbox">点</label><label><input type="checkbox">中点</label><label><input type="checkbox">中心点</label><label><input type="checkbox">交点</label><label><input type="checkbox">垂点</label><label><input type="checkbox">切点</label><label><input type="checkbox">四分点</label><label><input type="checkbox">节点</label><label><input type="checkbox">顶点</label><label><input type="checkbox" disabled>投影</label><label class="apart"><input type="checkbox" disabled>停用</label>
  </div>

  <footer class="status">
    <button class="cplane">工作平面</button><output class="coord">x 4.059</output><output class="coord">y 0.937</output><output class="coord">z</output><output class="coord unit">8.252 毫米</output><button class="layer"><i></i>默认值</button><button>锁定格点</button><button>正交</button><button>平面模式</button><button class="on">物件锁点</button><button class="on">智慧轨迹</button><button>操作轴</button><button>记录建构历史</button><button>过滤器</button><button class="cut">C</button>
  </footer>
</div>
<script src="views.js"></script>
</body>
</html>
```

FILE: styles.css
```css
* { box-sizing: border-box; }
html, body { height: 100%; }
body {
  margin: 0;
  padding: 2px 7px 5px 7px;
  background: #fafafa;
  color: #333;
  font: 12px/16px "Open Sans", "Noto Sans", "Noto Sans CJK SC", sans-serif;
  overflow: hidden;
}
button, input, select, output { font: inherit; color: inherit; }
button { border: 0; padding: 0; margin: 0; background: none; display: block; white-space: nowrap; }
h1, h2, h3, p { margin: 0; font-weight: 400; }
svg { display: block; }
.defs { position: absolute; width: 0; height: 0; }

/* content of the page behind the window */
.desktop { position: fixed; inset: 0; overflow: hidden; color: #444; background: linear-gradient(#30303a 0 2px, transparent 2px), linear-gradient(90deg, transparent 8px, #fafafa 8px), linear-gradient(#30303a 0 3px, #ececec 3px 34px, #dcdcdc 34px 74px, #8e98a5 74px 250px, #fafafa 250px 303px, #0b4a40 303px 309px, #fafafa 309px); }
.frag { position: absolute; left: 0; width: 7px; overflow: hidden; font-size: 11px; white-space: nowrap; }
.l1 { top: 9px; } .l2 { top: 253px; color: #b06a3a; } .l3 { top: 275px; } .l4 { top: 289px; } .l5 { top: 339px; } .l6 { top: 421px; } .l7 { top: 449px; } .l8 { top: 477px; }
.l9 { top: 532px; } .l10 { top: 560px; } .l11 { top: 587px; } .l12 { top: 615px; } .l13 { top: 642px; }
.frag.r1, .frag.r2, .frag.r3 { left: auto; right: 0; }
.frag.r1 { top: 339px; } .r2 { top: 449px; } .r3 { top: 477px; }
.rule { position: absolute; left: 0; right: 0; height: 1px; background: #888; }
.rule.a { top: 332px; } .rule.b { top: 526px; } .rule.c { top: 676px; } .rule.d { top: 74px; left: 50%; background: #ccc; }
.under { position: absolute; left: 2px; right: 0; bottom: 0; height: 6px; overflow: hidden; display: flex; align-items: flex-end; font-size: 11px; line-height: 15px; white-space: nowrap; }

.window { position: relative; height: 100%; display: flex; flex-direction: column; background: #eaebf0; border-right: 1px solid #9a9ca3; border-bottom: 1px solid #9a9ca3; box-shadow: 0 0 4px #8888; overflow: hidden; }
.titlebar, .menubar, .command { font-family: "Noto Sans", "Noto Sans CJK SC", sans-serif; font-size: 11px; color: #222; }

.titlebar { display: flex; align-items: center; height: 25px; flex: none; background: #fff; padding-left: 7px; }
.logo { width: 16px; height: 16px; margin-right: 4px; }
.titlebar h1 { flex: 1; font-size: 11px; }
.winbtns { display: flex; }
.winbtns button { width: 42px; height: 24px; display: grid; place-items: center; }
.winbtns svg { width: 12px; height: 12px; fill: none; stroke: #222; }

.menubar { display: flex; gap: 14px; height: 19px; flex: none; padding: 1px 6px 0; background: #fff; }
.menubar button { line-height: 18px; }

.command { flex: none; border-top: 4px solid #eaebf0; border-bottom: 3px solid #eaebf0; margin-left: 2px; border-left: 4px double #c8d2e2; background: #fff; }
.cmdrow { display: flex; padding-left: 2px; }
.history { height: 29px; border-bottom: 1px solid #c0cbdc; }
.log { flex: 1; display: flex; flex-direction: column; justify-content: flex-end; overflow: hidden; height: 28px; }
.log p { line-height: 18px; white-space: nowrap; flex: none; }
.log p:first-child { line-height: 16px; }
.cmdscroll { width: 16px; display: flex; flex-direction: column; background: #f0f0f2; }
.cmdscroll button { flex: 1; display: grid; place-items: center; }
.cmdscroll svg, .scrollbar svg { width: 8px; height: 6px; fill: none; stroke: #555; stroke-width: 2; }
.prompt { height: 19px; align-items: center; }
.prompt label { white-space: nowrap; }
.prompt em { font-weight: 700; }
.caret { width: 1px; height: 15px; margin-left: 3px; background: #000; }
.prompt input { flex: 1; min-width: 0; border: 0; outline: 0; padding: 0; background: none; }
.spin { width: 14px; margin-right: 1px; display: grid; gap: 1px; }
.spin button { height: 8px; border: 1px solid #999; background: #eee; display: grid; place-items: center; }
.spin svg { width: 6px; height: 4px; fill: #111; }

.tabbar { display: flex; flex: none; height: 31px; margin-top: 1px; margin-left: 2px; padding-top: 5px; border-top: 1px solid #d7dfea; border-left: 4px double #c8d2e2; color: #444; }
.tabs { flex: 1; min-width: 0; display: flex; overflow: hidden; border-bottom: 1px solid #cbd9e2; }
.tabs button { padding: 0 18px 0 17px; flex: none; line-height: 22px; }
.tabs .on { height: 25px; padding: 0 17px 0 16px; border: 1px solid #c9d1e3; border-bottom: 0; border-radius: 6px 3px 0 0; line-height: 20px; }
.more { width: 14px; border-left: 1px solid #c9c9df; border-top: 1px solid #c9c9df; font-weight: 700; font-size: 13px; line-height: 18px; color: #222; }
.gear { padding-bottom: 5px; }
.gear svg { width: 15px; height: 15px; }

.toolbar { display: grid; grid-template-columns: repeat(33, 1fr); flex: none; width: 87%; max-width: 852px; height: 28px; margin-left: 7px; align-items: center; justify-items: center; }
.toolbar button, .palette button { position: relative; width: 24px; height: 24px; }
.toolbar svg, .palette svg { width: 24px; height: 24px; }
.fly::after { content: ""; position: absolute; right: -1px; bottom: 0; border: 3px solid #666; border-left-color: transparent; border-top-color: transparent; }

.work { flex: 1; min-height: 0; display: flex; padding-top: 7px; }
.palette { width: 52px; flex: none; margin: 2px 7px 17px 1px; display: grid; grid-template-columns: 1fr 1fr; grid-auto-rows: 1fr; justify-items: center; align-items: center; border-top: 4px double #c8d2e2; }
.stage { flex: 1; min-width: 0; display: flex; flex-direction: column; }
.views { flex: 1; min-height: 0; display: grid; grid-template: 1fr 1fr / 1fr 1fr; gap: 1px; }
.view { position: relative; min-height: 0; min-width: 0; border: 1px solid #c5cddd; background: #9ea5ad; overflow: hidden; }
.canvas { width: 100%; height: 100%; }
.canvas text { font-size: 13px; fill: #6d7278; }
.minor, .major { fill: none; stroke: #79818a; stroke-opacity: .28; }
.major { stroke: #6c727b; stroke-opacity: .6; }
.deep .minor { stroke-opacity: .16; }
.deep .major { stroke-opacity: .45; }
.xaxis { stroke: #a24143; stroke-width: 2; fill: none; }
.yaxis { stroke: #3f9b42; stroke-width: 2; fill: none; }
.curve { stroke: #181818; stroke-width: 1.500; fill: none; }
.dot { fill: #fff; stroke: #222; stroke-width: 1; }
.snap { fill: none; stroke: #000; }
.triad { fill: none; stroke: #6c6f72; }
.vlabel { position: absolute; left: 0; top: 0; display: flex; align-items: center; height: 18px; padding: 0 4px 0 6px; background: #c4c9ce; color: #5d646b; font: 700 12px/18px "Noto Sans", sans-serif; }
.active .vlabel { background: #8ba1ee; color: #2b3454; }
.vlabel i { margin-left: 6px; height: 14px; border-left: 1px solid currentColor; padding-left: 2px; display: flex; align-items: center; }
.vlabel i::after { content: ""; border: 3px solid transparent; border-top: 4px solid currentColor; border-bottom: 0; }

.viewtabs { flex: none; display: flex; height: 29px; padding-left: 10px; align-items: flex-start; gap: 16px; color: #444; }
.viewtabs button { position: relative; line-height: 24px; }
.viewtabs .on svg { position: absolute; left: -20px; top: 0; width: 52px; height: 24px; fill: none; stroke: #c3cfe0; }
.viewtabs .plus { height: 24px; display: grid; place-items: center; }
.plus svg { width: 10px; height: 10px; fill: #fff; stroke: #888; }

.props { width: 177px; flex: none; margin-left: 6px; display: flex; flex-direction: column; padding-bottom: 8px; color: #444; }
.props h2 { display: flex; align-items: center; font-size: 12px; line-height: 16px; height: 21px; padding: 2px 0 0 4px; white-space: nowrap; }
.props h2::after { content: ""; flex: 1; height: 3px; margin-left: 5px; background: #d6dce9; }
.ptabs { display: flex; height: 26px; flex: none; border-bottom: 1px solid #c5cfe0; }
.ptabs button { width: 26px; height: 25px; flex: none; display: grid; place-items: center; }
.ptabs svg { width: 16px; height: 16px; }
.ptabs .on { height: 26px; border: 1px solid #c5cfe0; border-bottom: 0; background: #eaebf0; }
.ptabs .pgear { width: 21px; padding: 8px 0 0 5px; }
.ptabs .pgear svg { width: 14px; height: 14px; }
.pbody { flex: 1; min-height: 0; display: flex; flex-direction: column; border: 1px solid #c5cfe0; border-top: 0; }
.modes { display: flex; gap: 3px; padding: 4px 5px; }
.modes button { width: 26px; height: 26px; display: grid; place-items: center; }
.modes svg { width: 22px; height: 22px; }
.modes .on { background: #adbdf1; }
.scroller { flex: 1; min-height: 0; display: flex; }
.fields { flex: 1; min-width: 0; padding: 3px 6px 0 8px; overflow: hidden; }
.fields h3 { font-size: 14px; height: 28px; line-height: 28px; }
.row { display: flex; height: 23px; margin-left: 13px; border-top: 1px solid #dfe2e9; }
.row.first { margin-left: 0; padding-left: 13px; }
.row label { width: 58px; flex: none; padding-left: 4px; line-height: 22px; white-space: nowrap; border-right: 1px solid #dfe2e9; }
.row input:not([type=checkbox]), .row output { flex: 1; min-width: 0; width: 0; height: 22px; border: 0; outline: 0; background: #fff; padding: 0 0 0 4px; line-height: 22px; }
.row output { background: none; }
.row select { flex: 1; min-width: 0; height: 22px; border: 0; border-radius: 0; appearance: none; padding: 0 0 0 3px; background: url("data:image/svg+xml,%3Csvg xmlns='http://www.w3.org/2000/svg' width='22' height='22'%3E%3Crect x='.5' y='.5' width='20' height='21' fill='%23e2e2e2' stroke='%23b0b0b0'/%3E%3Cpath d='M7 9l3.500 4L14 9' fill='none' stroke='%23666' stroke-width='1.500'/%3E%3C/svg%3E") right center no-repeat #fff; }
.row button { flex: 1; height: 21px; margin: 1px 1px 0; border: 1px solid #adadad; background: #e1e1e1; color: #111; line-height: 19px; }
input[type=checkbox] { appearance: none; margin: 0; width: 12px; height: 12px; flex: none; border: 1px solid #444; background: #fff; }
input[type=checkbox]:disabled { width: 10px; height: 10px; border-color: #bbb; background: #ddd; margin-right: 1px; }
.row input[type=checkbox] { margin: 5px 0 0 2px; }
.scrollbar { width: 16px; flex: none; display: flex; flex-direction: column; background: #f0f0f0; }
.scrollbar button { height: 15px; flex: none; display: grid; place-items: center; }
.scrollbar svg { stroke: #999; stroke-width: 1; }
.thumb { flex: 262; background: #cdcdcd; }
.trackend { flex: 106; }

.osnap { display: flex; flex: none; align-items: center; gap: 7px; height: 19px; margin-left: 2px; padding: 2px 0 0 3px; border-left: 4px double #c8d2e2; }
.osnap label { display: flex; align-items: center; gap: 2px; flex: none; white-space: nowrap; }
.osnap .apart { margin-left: 14px; }
.status { display: flex; flex: none; height: 19px; padding: 0 24px 0 0; border-top: 1px solid #c5cfe0; white-space: nowrap; }
.status > * { height: 18px; line-height: 18px; padding: 0 3px 0 4px; flex: none; text-align: center; border-right: 1px solid #c5cfe0; }
.status .cplane { width: 55px; padding: 0 3px; }
.status .coord { width: 80px; }
.status .unit { text-align: right; border-right: 0; }
.status .layer { flex: 1; display: flex; align-items: center; gap: 2px; padding: 0 2px; }
.layer i { width: 13px; height: 13px; background: #000; }
.status .on { background: #d0d8f0; font-weight: 700; }
.status .cut { width: 8px; padding: 0 0 0 1px; overflow: hidden; text-align: left; }
```

FILE: views.js
```js
const OX = 184, OY = 113.5, UNIT = 7.37;
const CENTER = [-2.24, 6.17], RADIUS = 8.252, CURSOR = [4.059, 0.937];

// Perspective camera aimed at the world origin, 50 mm lens.
const DIST = 99.564, FOCAL = 473;
const project = (x, y) => {
  const k = FOCAL / (DIST - 0.433 * x + 0.75 * y);
  return [OX + (0.866 * x + 0.5 * y) * k, OY - (-0.25 * x + 0.433 * y) * k];
};
const seg = (a, b) => `M${a[0].toFixed(1)} ${a[1].toFixed(1)}L${b[0].toFixed(1)} ${b[1].toFixed(1)}`;
const dot = ([x, y]) => `<circle class="dot" cx="${x}" cy="${y}" r="3"/>`;
const snap = ([x, y]) => `<path class="snap" d="M${x - 4} ${y}h8M${x} ${y - 4}v8"/><circle class="snap" cx="${x}" cy="${y}" r="2.5"/>`;

function flatGrid() {
  let minor = '', major = '';
  for (let i = -25; i <= 25; i++) {
    const x = Math.round(OX + i * UNIT) + 0.5, y = Math.round(OY + i * UNIT - 0.5) + 0.5;
    const d = `M${x} 0V227M0 ${y}H369`;
    if (i % 5) minor += d; else major += d;
  }
  return `<path class="minor" d="${minor}"/><path class="major" d="${major}"/>`;
}

function perspectiveGrid() {
  let minor = '', major = '';
  for (let i = -70; i <= 70; i++) {
    const d = seg(project(i, -70), project(i, 70)) + seg(project(-70, i), project(70, i));
    if (i % 5) minor += d; else major += d;
  }
  return `<g class="deep"><path class="minor" d="${minor}"/><path class="major" d="${major}"/></g>`;
}

const triad = (v, h) => `<path class="triad" d="M33.5 167v27.500h27"/><text x="35" y="168">${v}</text><text x="63" y="196">${h}</text>`;
const axes = `<path class="xaxis" d="M${OX} ${OY}H369"/><path class="yaxis" d="M${OX} 0V${OY}"/>`;
const flat = (x, y) => [OX + x * UNIT, OY - y * UNIT];

function elevation(center, cursor, h) {
  return flatGrid() + axes +
    `<path class="curve" d="${seg(flat(center - RADIUS, 0), flat(center + RADIUS, 0))}"/>` +
    snap(flat(cursor, 0)) + dot(flat(center, 0)) + triad('z', h);
}

function perspective() {
  const pts = [];
  for (let a = 0; a < 360; a += 5) {
    const r = a * Math.PI / 180;
    pts.push(project(CENTER[0] + RADIUS * Math.cos(r), CENTER[1] + RADIUS * Math.sin(r)).join(' '));
  }
  return perspectiveGrid() +
    `<path class="xaxis" d="${seg(project(0, 0), project(70, 0))}"/><path class="yaxis" d="${seg(project(0, 0), project(0, 70))}"/>` +
    `<path class="curve" d="M${pts.join('L')}Z"/>` + snap(project(...CURSOR)) + dot(project(...CENTER)) +
    `<path class="triad" d="M33.500 169v25l24 8M33.500 194l13-11"/><text x="35" y="171">z</text><text x="48" y="183">y</text><text x="59" y="203">x</text>`;
}

const scenes = {
  top: () => flatGrid() + axes +
    `<circle class="curve" cx="${flat(...CENTER)[0]}" cy="${flat(...CENTER)[1]}" r="${RADIUS * UNIT}"/>` +
    dot(flat(...CENTER)) + snap(flat(...CURSOR)) + triad('y', 'x'),
  perspective,
  front: () => elevation(CENTER[0], CURSOR[0], 'x'),
  right: () => elevation(CENTER[1], CURSOR[1], 'y'),
};
document.querySelectorAll('.canvas').forEach(svg => { svg.innerHTML = scenes[svg.dataset.view](); });
```
